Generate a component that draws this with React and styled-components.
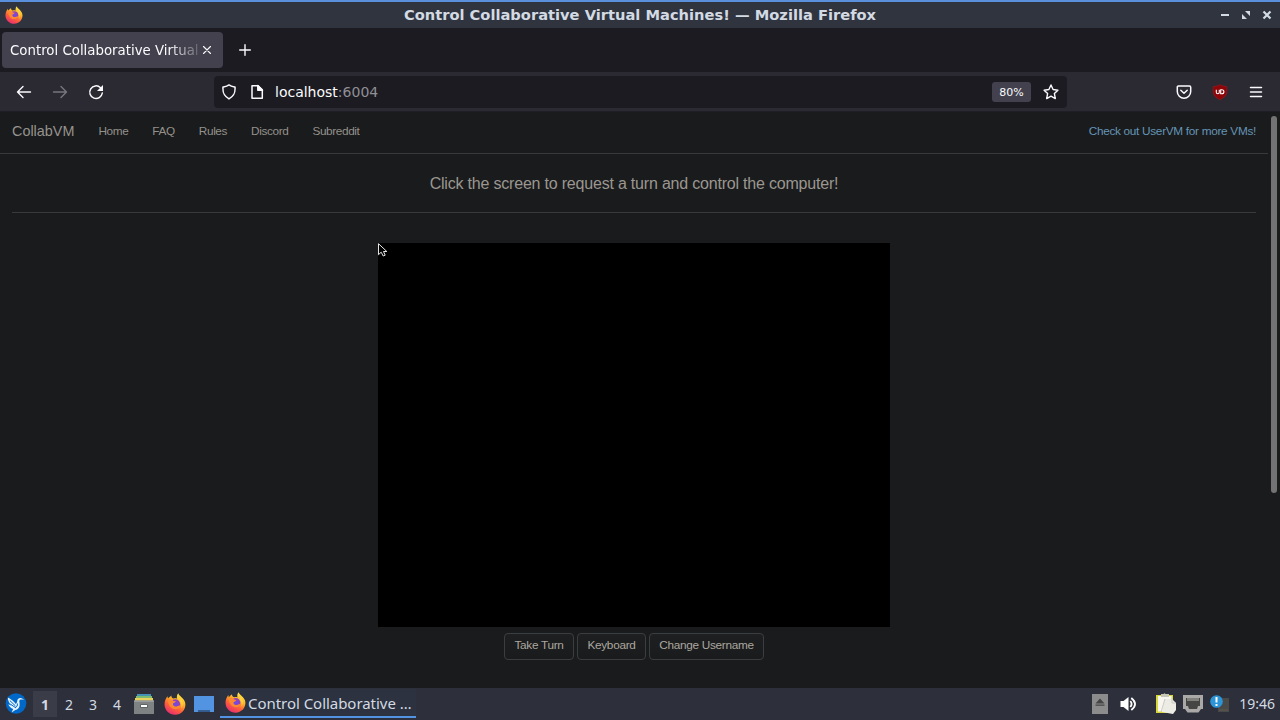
import React from "react";
import styled, { createGlobalStyle } from "styled-components";

const GlobalStyle = createGlobalStyle`
  * { box-sizing: border-box; }
  body { margin: 0; background: #1a1b1d; overflow: hidden; }
  svg { display: block; flex: none; }
`;

const Desktop = styled.div`
  width: 1280px;
  height: 720px;
  display: flex;
  flex-direction: column;
  font-family: "DejaVu Sans", sans-serif;
  color: #fbfbfe;
  white-space: nowrap;
`;

const TitleBar = styled.header`
  height: 28px;
  flex: none;
  display: grid;
  grid-template-columns: 60px 1fr 60px;
  align-items: center;
  border-top: 2px solid #5a8fdb;
  background: #2f343f;
  padding: 0 7px 0 5px;
`;

const WindowTitle = styled.div`
  text-align: center;
  font-size: 14.667px;
  font-weight: bold;
  line-height: 26px;
  color: #d3dae3;
  padding-left: 2px;
`;

const WindowButtons = styled.div`
  display: flex;
  justify-content: flex-end;
  gap: 9px;
`;

const TabStrip = styled.div`
  height: 44px;
  flex: none;
  display: flex;
  align-items: center;
  background: #1c1b22;
  padding-left: 2px;
`;

const Tab = styled.div`
  width: 221px;
  height: 36px;
  display: flex;
  align-items: center;
  justify-content: space-between;
  padding: 0 11px 0 8px;
  border-radius: 4px;
  background: #42414d;
  margin-right: 16px;
`;

const TabLabel = styled.span`
  width: 188px;
  overflow: hidden;
  font-size: 13.333px;
  line-height: 20px;
  padding-top: 2px;
  mask-image: linear-gradient(to right, #000 158px, rgba(0, 0, 0, 0.2) 188px);
`;

const Toolbar = styled.div`
  height: 40px;
  flex: none;
  display: flex;
  align-items: center;
  background: #2b2a33;
  border-bottom: 1px solid #1f1e26;
  padding: 0 16px;
`;

const NavButtons = styled.div`
  width: 198px;
  display: flex;
  gap: 20px;
`;

const AddressBar = styled.div`
  width: 853px;
  height: 32px;
  display: flex;
  align-items: center;
  padding: 0 8px 0 7px;
  border-radius: 4px;
  background: #1c1b22;
`;

const Address = styled.span`
  flex: 1;
  margin-left: 10px;
  font-size: 14px;
  line-height: 20px;
`;

const Port = styled.span`
  color: #8f8f96;
`;

const Zoom = styled.span`
  width: 39px;
  height: 20px;
  margin-right: 12px;
  border-radius: 3px;
  background: #42414d;
  font-size: 11px;
  line-height: 21px;
  text-align: center;
`;

const ToolbarActions = styled.div`
  flex: 1;
  display: flex;
  justify-content: flex-end;
  gap: 20px;
`;

const Viewport = styled.div`
  height: 576px;
  flex: none;
  display: flex;
  background: #1a1b1d;
  font-family: "Liberation Sans", Arial, sans-serif;
`;

const Page = styled.div`
  width: 1268px;
  display: flex;
  flex-direction: column;
`;

const ScrollTrack = styled.div`
  width: 12px;
  padding: 4px 3px 0 3px;
`;

const ScrollThumb = styled.div`
  height: 377px;
  width: 6px;
  border-radius: 3px;
  background: #737373;
`;

const SiteNav = styled.nav`
  height: 42px;
  display: flex;
  align-items: center;
  gap: 24px;
  padding: 0 12px 3px;
  border-bottom: 1px solid #37393b;
`;

const Brand = styled.a`
  font-size: 14.4px;
  line-height: 20px;
  color: #96938d;
`;

const NavLink = styled.a`
  font-size: 11.8px;
  line-height: 18px;
  color: ${(p) => (p.$accent ? "#6595b5" : "#94918b")};
  letter-spacing: ${(p) => (p.$accent ? "-0.3px" : "-0.38px")};
  margin-left: ${(p) => (p.$accent ? "auto" : "0")};
`;

const Main = styled.main`
  flex: 1;
  display: flex;
  flex-direction: column;
  align-items: center;
  padding: 0 12px;
`;

const Notice = styled.h1`
  width: 100%;
  height: 59px;
  margin: 0 0 30px;
  border-bottom: 1px solid #37393b;
  text-align: center;
  font-size: 16px;
  font-weight: normal;
  line-height: 59px;
  letter-spacing: -0.2px;
  color: #9b9790;
`;

const Screen = styled.div`
  position: relative;
  width: 512px;
  height: 384px;
  background: #000;
`;

const Pointer = styled.svg`
  position: absolute;
  left: 0;
  top: 0;
`;

const Controls = styled.div`
  display: flex;
  gap: 3px;
  margin-top: 6px;
`;

const Button = styled.button`
  width: ${(p) => p.$width}px;
  height: 27px;
  padding: 0 0 3px;
  border: 1px solid #3b3e40;
  border-radius: 4px;
  background: linear-gradient(#1d1f20, #191b1c);
  color: #aba79f;
  font: 11.8px "Liberation Sans", Arial, sans-serif;
  letter-spacing: -0.3px;
`;

const Taskbar = styled.footer`
  height: 32px;
  flex: none;
  display: flex;
  align-items: center;
  background: #2d303b;
  font-family: "Noto Sans", sans-serif;
  color: #d3dae3;
  padding: 0 5px 0 5px;
`;

const Workspaces = styled.div`
  display: flex;
  margin: 0 4px 0 6px;
`;

const Workspace = styled.span`
  width: 24px;
  height: 26px;
  text-align: center;
  font-size: 14px;
  line-height: 27px;
  font-weight: ${(p) => (p.$active ? "bold" : "normal")};
  background: ${(p) => (p.$active ? "#3a3c47" : "transparent")};
  color: #d3dae3;
`;

const Launchers = styled.div`
  display: flex;
  align-items: center;
  gap: 8.5px;
  width: 87px;
`;

const Task = styled.div`
  width: 196px;
  height: 29px;
  display: flex;
  align-items: center;
  gap: 2px;
  padding-left: 5px;
  border-bottom: 2px solid #5294e2;
  background: #2c3240;
  align-self: flex-start;
  margin-top: 1px;
`;

const TaskLabel = styled.span`
  font-size: 15px;
  line-height: 26px;
  letter-spacing: -0.04px;
`;

const Tray = styled.div`
  flex: 1;
  display: flex;
  align-items: center;
  justify-content: flex-end;
`;

const TrayItem = styled.span`
  margin-right: ${(p) => p.$gap}px;
`;

const Clock = styled.time`
  width: 37px;
  font-size: 14px;
  line-height: 30px;
  display: flex;
  justify-content: flex-end;
`;

function FirefoxIcon({ size = 20, id }) {
  return (
    <svg width={size} height={size} viewBox="0 0 24 24">
      <defs>
        <linearGradient id={id + "a"} x1="0.8" y1="0" x2="0.25" y2="1">
          <stop offset="0" stopColor="#fff44f" />
          <stop offset="0.35" stopColor="#ffb52a" />
          <stop offset="0.65" stopColor="#ff6038" />
          <stop offset="1" stopColor="#e62878" />
        </linearGradient>
        <radialGradient id={id + "b"}>
          <stop offset="0" stopColor="#6a4de8" />
          <stop offset="1" stopColor="#9b3fb4" />
        </radialGradient>
      </defs>
      <path d="M15.5 0.3c1 3 5.500 4.600 7.300 9.200C25 16 20 23.700 12.200 23.700 5.500 23.700.6 18.700.6 12.300c0-3.400 1.300-6.400 3.200-8.800L4.300 6C5.700 4.200 7.600 3.200 8 2.600c0 2 .8 3 2.400 3.400 1.500-.5 2.700-.3 3.800.2-.5-2 0-4.300 1.300-5.900Z" fill={`url(#${id}a)`} />
      <circle cx="12.300" cy="12.200" r="5.300" fill={`url(#${id}b)`} />
      <path d="M4.200 7.500c2.200-1 4.600-.5 6.300 1.100l2.400.4c-.3 1.400-1.700 1.800-3 2.300-.5 1.900.7 3.500 2.700 3.500 2.400 0 3.400-1.800 5.500-1-1 3-4.200 4.300-6.800 3.700-4-.8-6.900-4.700-7.100-10Z" fill="#ff8930" />
      <path d="M16.500 4c4 3.500 5.500 8 2.200 13 1-3.500.3-6.500-2-9.300Z" fill="#ffd33f" />
    </svg>
  );
}

function Line({ d, size = 16, color = "#fbfbfe", width = 1.4 }) {
  return (
    <svg width={size} height={size} viewBox={`0 0 ${size} ${size}`} fill="none" stroke={color} strokeWidth={width} strokeLinecap="round" strokeLinejoin="round">
      <path d={d} />
    </svg>
  );
}

function PageIcon() {
  return (
    <svg width="16" height="16" viewBox="0 0 16 16" fill="none" stroke="#fbfbfe" strokeWidth="1.500" strokeLinejoin="round">
      <path d="M3 1.700h6l4.300 4.200v8.400H3Z" />
      <path d="M8.800 1.500v4.700h4.700Z" fill="#fbfbfe" />
    </svg>
  );
}

const Identity = styled.div`
  display: flex;
  gap: 12px;
`;

function ReloadIcon() {
  return (
    <svg width="16" height="16" viewBox="0 0 16 16" fill="none" stroke="#fbfbfe" strokeWidth="1.500" strokeLinecap="round">
      <path d="M12.500 3.700A6.300 6.300 0 1 0 14.300 9" />
      <path d="M15 1v6H9Z" fill="#fbfbfe" stroke="none" />
    </svg>
  );
}

function UblockIcon() {
  return (
    <svg width="16" height="16" viewBox="0 0 16 16">
      <path d="M8 .5c2 1.500 4.500 2 6.800 2.100V8c0 3.500-3.300 6-6.800 7.700C4.500 14 1.200 11.500 1.200 8V2.600C3.500 2.500 6 2 8 .5Z" fill="#8c0508" stroke="#b0161c" strokeWidth=".5" />
      <path d="M4.300 5.700v2.500q0 1.500 1.600 1.500 1.400 0 1.400-1.500V5.700M8.700 5.700v4h1.100q2.100 0 2.100-2t-2.100-2Z" fill="none" stroke="#fff" strokeWidth="1.100" />
    </svg>
  );
}

function LubuntuIcon() {
  return (
    <svg width="22" height="22" viewBox="0 0 22 22">
      <circle cx="11" cy="10.500" r="10.300" fill="#0068c8" />
      <path d="M2.800 4.500c3 1.500 6 3.700 8 6.600 1.300-1.200 1.300-2.300 1.500-3.600.3-2.200 2.400-3 4-2.300l3 1.300-3.300-.1c-1.700-.1-1.900 1.300-1.500 3.100.7 4.200-1.100 7.200-4.200 7.500l-3.700 2.500 1.600-3.500C5.800 15 4 13.400 3.300 11.200l3.400 1.500C4.300 10.500 3 8 2.800 4.500Z" fill="#e7f3ff" />
      <path d="M4.800 7.500 10.500 13M5.300 11l5 3.500M12.500 10.500q.5 3-2.500 4.500" stroke="#0068c8" strokeWidth="1" fill="none" />
    </svg>
  );
}

function FilesIcon() {
  return (
    <svg width="22" height="22" viewBox="0 0 22 22">
      <path d="M4 1h14v3H4Z" fill="#4493b5" />
      <path d="M3 3h16v3H3Z" fill="#7dbb72" />
      <path d="M2 5h18v4H2Z" fill="#e9d15e" />
      <path d="M1 7.500h20V21H1Z" fill="#7f8283" />
      <path d="M1 7.500h20V9H1Z" fill="#989b9c" />
      <rect x="7" y="11" width="8" height="4" rx="1.500" fill="#606364" />
      <rect x="8" y="12" width="6" height="2" fill="#fff" />
    </svg>
  );
}

function DesktopIcon() {
  return (
    <svg width="20" height="18" viewBox="0 0 20 18">
      <path d="M0 1h20v16h-4v-1.500H4V17H0Z" fill="#5294e2" />
      <path d="M4 15.500h12V17H4Z" fill="#315b91" />
    </svg>
  );
}

function EjectIcon() {
  return (
    <svg width="16" height="20" viewBox="0 0 16 20">
      <path d="M0 0h16v20H0Z" fill="#8c8c8c" />
      <path d="m8 4.500 4.500 5h-9ZM3.500 10.500h9v1.300h-9Z" fill="#444" />
    </svg>
  );
}

function VolumeIcon() {
  return (
    <svg width="17" height="16" viewBox="0 0 17 16" fill="none" stroke="#fff" strokeWidth="1.800">
      <path d="M.5 5h3L8.500 1v14l-5-4h-3Z" fill="#fff" stroke="none" />
      <path d="M10.300 5q2.600 3 0 6M11.300 2q7.500 6 0 12" />
    </svg>
  );
}

function ClipboardIcon() {
  return (
    <svg width="20" height="22" viewBox="0 0 20 22">
      <path d="M0 2h17v18H0Z" fill="#d8d83b" />
      <path d="M2 3h13.500v15.500H2Z" fill="#f7f7f0" />
      <path d="M5 1h2.500q1-1.500 2 0H13v3H5Z" fill="#c5c6b8" />
      <path d="M8 6h8l4 4v7l-3 4-11-2Z" fill="#ecece5" />
      <path d="m9 6-4 13M16 6v4h4" stroke="#c2c2b7" strokeWidth=".8" fill="none" />
    </svg>
  );
}

function NetworkIcon() {
  return (
    <svg width="20" height="18" viewBox="0 0 20 18">
      <path d="M0 0h20v14h-2l-2.500 3.500h-11L2 14H0Z" fill="#aaa9a7" />
      <path d="M3 3h14v8h-2l-1 3H6l-1-3H3Z" fill="#454543" />
      <path d="M5 3v3M7 3v3M9 3v3M11 3v3M13 3v3M15 3v3" stroke="#c9c8c5" strokeWidth=".9" />
    </svg>
  );
}

function UpdateIcon() {
  return (
    <svg width="19" height="18" viewBox="0 0 19 18">
      <path d="M8 3h11v14H8Z" fill="#494947" />
      <path d="M9 15h9" stroke="#5c5a57" />
      <circle cx="6.500" cy="6.500" r="6.300" fill="#2c95d8" />
      <path d="M5.500 2h2v5.500h-2ZM5.500 9h2v2h-2Z" fill="#fff" />
    </svg>
  );
}

const links = ["Home", "FAQ", "Rules", "Discord", "Subreddit"];
const buttons = [["Take Turn", 70], ["Keyboard", 69], ["Change Username", 115]];

export default function App() {
  return (
    <Desktop>
      <GlobalStyle />
      <TitleBar>
        <FirefoxIcon size={18} id="title" />
        <WindowTitle>Control Collaborative Virtual Machines! — Mozilla Firefox</WindowTitle>
        <WindowButtons>
          <svg width="12" height="12" viewBox="0 0 12 12"><path d="M2 5h8v2H2Z" fill="#d3dae3" /></svg>
          <svg width="12" height="12" viewBox="0 0 12 12"><path d="M5 2h5v5ZM2 5v5h5Z" fill="#d3dae3" /></svg>
          <svg width="12" height="12" viewBox="0 0 12 12"><path d="m2.500 2.500 7 7m0-7-7 7" stroke="#d3dae3" strokeWidth="2.200" /></svg>
        </WindowButtons>
      </TitleBar>
      <TabStrip>
        <Tab>
          <TabLabel>Control Collaborative Virtual</TabLabel>
          <Line size={10} width={1.1} d="m1.500 1.500 7 7m0-7-7 7" />
        </Tab>
        <Line size={12} width={1.4} d="M6 .700v10.600M.7 6h10.600" />
      </TabStrip>
      <Toolbar>
        <NavButtons>
          <Line d="M14.500 8H1.500M7 2.500 1.500 8 7 13.500" />
          <Line color="#77767f" d="M1.500 8h13M9 2.500 14.500 8 9 13.500" />
          <ReloadIcon />
        </NavButtons>
        <AddressBar>
          <Identity>
            <Line width={1.5} d="M8 .900c2 1.500 4 1.800 6 2.200.5 6-1 9-6 11.800C3 12.100 1.500 9.100 2 3.100 4 2.700 6 2.400 8 .900Z" />
            <PageIcon />
          </Identity>
          <Address>localhost<Port>:6004</Port></Address>
          <Zoom>80%</Zoom>
          <Line width={1.4} d="m8 1 2.100 4.500 4.800.7-3.500 3.400.9 5L8 12.200l-4.300 2.400.9-5L1.100 6.200l4.800-.7Z" />
        </AddressBar>
        <ToolbarActions>
          <Line width={1.5} d="M2.500 2h11q1.200 0 1.200 1.200V7.500a6.700 6.700 0 0 1-13.400 0V3.200Q1.300 2 2.500 2ZM4.800 6.200 8 9.300l3.200-3.100" />
          <UblockIcon />
          <Line width={1.5} d="M2.500 3.500h11M2.500 8h11M2.500 12.500h11" />
        </ToolbarActions>
      </Toolbar>
      <Viewport>
        <Page>
          <SiteNav>
            <Brand>CollabVM</Brand>
            {links.map((name) => <NavLink key={name}>{name}</NavLink>)}
            <NavLink $accent>Check out UserVM for more VMs!</NavLink>
          </SiteNav>
          <Main>
            <Notice>Click the screen to request a turn and control the computer!</Notice>
            <Screen>
              <Pointer width="10" height="14" viewBox="0 0 10 14">
                <path d="M.5.700v11L3.200 9.200l2 3.800 2-.8-1.700-3.700h3.300Z" fill="#000" stroke="#fff" strokeWidth=".9" />
              </Pointer>
            </Screen>
            <Controls>
              {buttons.map(([label, width]) => <Button key={label} $width={width}>{label}</Button>)}
            </Controls>
          </Main>
        </Page>
        <ScrollTrack><ScrollThumb /></ScrollTrack>
      </Viewport>
      <Taskbar>
        <LubuntuIcon />
        <Workspaces>
          {[1, 2, 3, 4].map((n) => <Workspace key={n} $active={n === 1}>{n}</Workspace>)}
        </Workspaces>
        <Launchers>
          <FilesIcon />
          <FirefoxIcon size={22} id="launch" />
          <DesktopIcon />
        </Launchers>
        <Task>
          <FirefoxIcon size={21} id="task" />
          <TaskLabel>Control Collaborative …</TaskLabel>
        </Task>
        <Tray>
          <TrayItem $gap={12}><EjectIcon /></TrayItem>
          <TrayItem $gap={19}><VolumeIcon /></TrayItem>
          <TrayItem $gap={7}><ClipboardIcon /></TrayItem>
          <TrayItem $gap={7}><NetworkIcon /></TrayItem>
          <TrayItem $gap={9}><UpdateIcon /></TrayItem>
          <Clock>19:46</Clock>
        </Tray>
      </Taskbar>
    </Desktop>
  );
}
